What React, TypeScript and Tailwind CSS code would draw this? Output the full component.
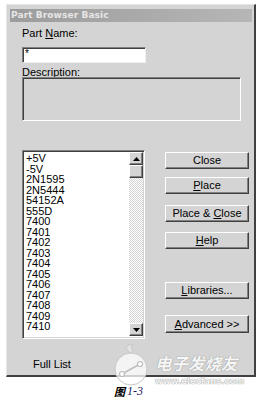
import React from "react";

const items = [
  "+5V", "-5V", "2N1595", "2N5444", "54152A", "555D", "7400", "7401", "7402",
  "7403", "7404", "7405", "7406", "7407", "7408", "7409", "7410",
];

const raised =
  "bg-[#d4d4d4] border border-t-white border-l-white border-r-[#404040] border-b-[#404040] shadow-[inset_-1px_-1px_0_#808080]";

function Btn({ children, h = "h-[17px]", mt }: { children: React.ReactNode; h?: string; mt: string }) {
  return (
    <div className={`${raised} ${h} ${mt} w-[84px] flex items-center justify-center text-[11px] leading-none text-black`}>
      {children}
    </div>
  );
}

function Tri({ up }: { up?: boolean }) {
  return (
    <svg width="7" height="4" viewBox="0 0 7 4">
      {up ? <polygon points="0,4 7,4 3.5,0" fill="#000" /> : <polygon points="0,0 7,0 3.5,4" fill="#000" />}
    </svg>
  );
}

export default function App() {
  return (
    <div className="relative w-[262px] h-[399px] bg-white overflow-hidden font-['Liberation_Sans',Arial,sans-serif] text-black">
      <div className="pt-[4px] pl-[6px]">
        <div className="w-[250px] h-[373px] bg-[#d4d4d4] border-t border-l border-t-[#e6e6e6] border-l-[#e6e6e6] border-r-2 border-b-2 border-r-[#404040] border-b-[#404040] flex flex-col">
          {/* title bar */}
          <div className="mt-[4px] ml-[3px] mr-[2px] h-[13px] bg-[linear-gradient(90deg,#9c9c9c,#b6b6b6)] flex items-center pl-[1px]">
            <span className="font-['DejaVu_Sans',Verdana,sans-serif] font-bold text-[9px] leading-none text-[#e6e6e6] tracking-[0.1px]">
              Part Browser Basic
            </span>
          </div>

          <div className="pl-[15px] flex flex-col">
            <div className="mt-[5px] text-[11px] leading-[12px]">
              Part <span className="underline underline-offset-[1px]">N</span>ame:
            </div>
            <div className="mt-[8px] w-[124px] h-[16px] bg-white border-t border-l border-t-[#808080] border-l-[#808080] border-b border-r border-b-[#f0f0f0] border-r-[#f0f0f0] shadow-[inset_1px_1px_0_#404040] pl-[2px] text-[10px] leading-[12px]">
              *
            </div>
            <div className="mt-[4px] text-[11px] leading-[10px]">Description:</div>
            <div className="w-[219px] h-[44px] bg-[#d4d4d4] border-t border-l border-t-[#808080] border-l-[#808080] border-b border-r border-b-white border-r-white shadow-[inset_1px_1px_0_#404040]" />

            <div className="mt-[29px] flex">
              {/* list box */}
              <div className="w-[123px] h-[189px] bg-white border-t border-l border-t-[#808080] border-l-[#808080] border-b border-r border-b-white border-r-white shadow-[inset_1px_1px_0_#404040,inset_-1px_-1px_0_#d4d4d4] p-[1px] flex">
                <div className="flex-1 pl-[2px] pt-[1px] text-[11px] leading-[10.5px] overflow-hidden">
                  {items.map((it) => (
                    <div key={it}>{it}</div>
                  ))}
                </div>
                <div className="w-[14px] flex flex-col mb-[1px]">
                  <div className={`${raised} h-[13px] flex items-center justify-center`}>
                    <Tri up />
                  </div>
                  <div className={`${raised} h-[13px]`} />
                  <div className="flex-1 bg-[repeating-conic-gradient(#d4d4d4_0_25%,#ffffff_0_50%)] bg-[length:2px_2px]" />
                  <div className={`${raised} h-[13px] flex items-center justify-center`}>
                    <Tri />
                  </div>
                </div>
              </div>

              {/* buttons */}
              <div className="ml-[20px] flex flex-col">
                <Btn mt="mt-[2px]">Close</Btn>
                <Btn mt="mt-[8px]">
                  <span className="underline underline-offset-[1px]">P</span>lace
                </Btn>
                <Btn mt="mt-[11px]">
                  Place &amp;&nbsp;<span className="underline underline-offset-[1px]">C</span>lose
                </Btn>
                <Btn mt="mt-[10px]">
                  <span className="underline underline-offset-[1px]">H</span>elp
                </Btn>
                <Btn mt="mt-[33px]">
                  <span className="underline underline-offset-[1px]">L</span>ibraries...
                </Btn>
                <Btn mt="mt-[16px]" h="h-[18px]">
                  <span className="underline underline-offset-[1px]">A</span>dvanced &gt;&gt;
                </Btn>
              </div>
            </div>

            <div className="mt-[19px] pl-[11px] text-[11px] leading-[12px]">Full List</div>
          </div>
        </div>

        {/* caption */}
        <div className="mt-[8px] pl-[108px] flex items-center gap-[2px] h-[12px] leading-[12px]">
          <span className="font-['Noto_Sans_CJK_SC',sans-serif] italic font-bold text-[11px] leading-[12px] text-black">图</span>
          <span className="font-['Liberation_Serif',serif] italic text-[12px] leading-[12px] text-[#1c1c60]">1-3</span>
        </div>
      </div>

      {/* watermark */}
      <div className="absolute left-[113px] top-[344px] pointer-events-none">
        <svg width="38" height="44" viewBox="0 0 38 44">
          <circle cx="18" cy="25" r="16" fill="#ffffff" fillOpacity="0.75" stroke="#c8c8c8" strokeWidth="1" />
          <path d="M18 9 C10 4 14 0 20 1 C16 4 22 6 18 9 Z" fill="#e4e4e4" stroke="#c0c0c0" strokeWidth="0.8" />
          <line x1="9" y1="30" x2="27" y2="20" stroke="#bdbdbd" strokeWidth="1.5" />
          <circle cx="9" cy="30" r="2.5" fill="#fff" stroke="#bdbdbd" strokeWidth="1.2" />
          <circle cx="27" cy="20" r="2.5" fill="#fff" stroke="#bdbdbd" strokeWidth="1.2" />
        </svg>
      </div>
      <div className="absolute left-[155px] top-[355px] h-[16px] pointer-events-none font-['Noto_Sans_CJK_SC',sans-serif] font-bold italic text-[16.5px] leading-[16px] text-[#f6f6f6] [text-shadow:0_0_1px_#9a9a9a,0_0_1px_#9a9a9a]">
        电子发烧友
      </div>
      <div className="absolute left-[155px] top-[377px] h-[9px] pointer-events-none font-['DejaVu_Sans',sans-serif] font-bold text-[8.5px] leading-[9px] text-[#f4f4f4] [text-shadow:0_0_1px_#9a9a9a,0_0_1px_#9a9a9a]">
        www.elecfans.com
      </div>
    </div>
  );
}
